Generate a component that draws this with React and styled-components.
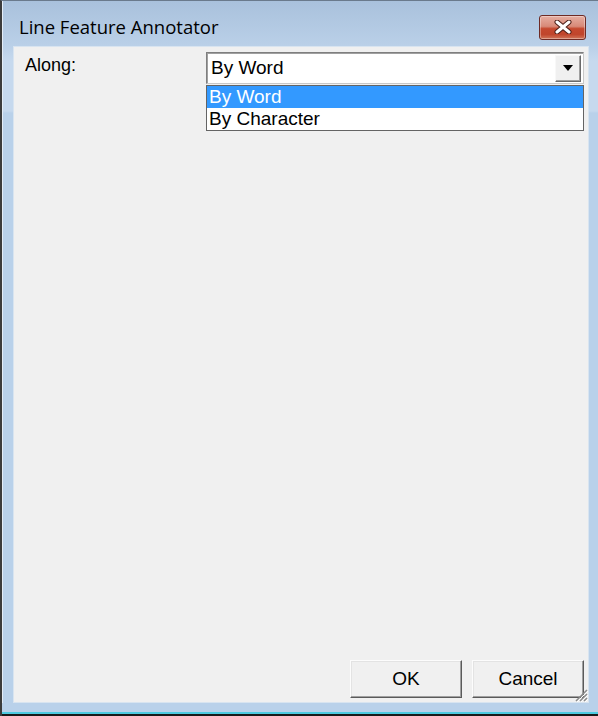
import React from 'react';
import styled, { createGlobalStyle } from 'styled-components';

const Global = createGlobalStyle`
  html, body { margin: 0; padding: 0; background: #1e1e1e; }
  body { font-family: "Liberation Sans", Arial, sans-serif; }
`;

const options = ['By Word', 'By Character'];

const App = () => (
  <>
    <Global />
    <Window>
      <TitleBar>
        <Title>Line Feature Annotator</Title>
        <CloseButton aria-label="Close">
          <svg width="22" height="14" viewBox="0 0 22 14">
            <path d="M5 2 L17 12 M17 2 L5 12" stroke="#4a1d16" strokeWidth="5" strokeLinecap="round" />
            <path d="M5 2 L17 12 M17 2 L5 12" stroke="#ffffff" strokeWidth="3" strokeLinecap="round" />
          </svg>
        </CloseButton>
      </TitleBar>
      <Client>
        <Row>
          <Label>Along:</Label>
          <ComboWrap>
            <Combo>
              <ComboText>By Word</ComboText>
              <DropButton>
                <svg width="10" height="6" viewBox="0 0 10 6">
                  <path d="M0 0 H10 L5 6 Z" fill="#000" />
                </svg>
              </DropButton>
            </Combo>
            <List>
              {options.map((o, i) => (
                <Option key={o} selected={i === 0}>{o}</Option>
              ))}
            </List>
          </ComboWrap>
        </Row>
        <Footer>
          <Button>OK</Button>
          <Button>Cancel</Button>
        </Footer>
        <Grip viewBox="0 0 16 16" width="16" height="16">
          <path d="M15 4 L4 15 M15 8 L8 15 M15 12 L12 15" stroke="#8a8a8a" strokeWidth="1.5" />
          <path d="M16 5 L5 16 M16 9 L9 16 M16 13 L13 16" stroke="#ffffff" strokeWidth="1" />
        </Grip>
      </Client>
      <BottomEdge />
    </Window>
  </>
);

const Window = styled.div`
  width: 598px;
  height: 716px;
  box-sizing: border-box;
  border-left: 2px solid #3c3c3c;
  border-top: 1px solid #6a7a8c;
  display: flex;
  flex-direction: column;
  background: linear-gradient(to bottom, #a9c1dc 0px, #bad0e8 45px, #c6d9ee 60px, #c6d9ee 110px, #b9d1ea 112px, #b9d1ea 100%);
  box-shadow: inset 1px 0 0 #e4edf7;
  overflow: hidden;
`;

const TitleBar = styled.div`
  height: 45px;
  display: flex;
  align-items: center;
  justify-content: space-between;
  padding: 0 12px 0 17px;
  flex-shrink: 0;
`;

const Title = styled.div`
  font-family: "Open Sans", "DejaVu Sans", sans-serif;
  font-size: 18.5px;
  color: #000;
  margin-top: 5px;
`;

const CloseButton = styled.div`
  width: 45px;
  height: 23px;
  margin-top: 7px;
  border: 1px solid #6e2b25;
  border-radius: 3px;
  display: flex;
  align-items: center;
  justify-content: center;
  background: linear-gradient(to bottom, #e6aea2 0%, #d88a78 45%, #c5492f 55%, #c0452c 80%, #d0765a 100%);
  box-shadow: inset 0 0 0 1px rgba(255, 255, 255, 0.35);
`;

const Client = styled.div`
  position: relative;
  flex: 1;
  margin: 0 9px 0 11px;
  background: #f0f0f0;
  border: 1px solid #d8e4f0;
  display: flex;
  flex-direction: column;
  justify-content: space-between;
`;

const Row = styled.div`
  display: flex;
  align-items: flex-start;
  padding: 5px 0 0 11px;
`;

const Label = styled.div`
  font-size: 18px;
  color: #000;
  width: 181px;
  padding-top: 3px;
`;

const ComboWrap = styled.div`
  display: flex;
  flex-direction: column;
  width: 378px;
`;

const Combo = styled.div`
  height: 32px;
  box-sizing: border-box;
  border: 1px solid #7f7f7f;
  border-right-color: #c8c8c8;
  border-bottom-color: #c8c8c8;
  box-shadow: inset 1px 1px 0 #a0a0a0;
  background: #fff;
  display: flex;
  align-items: center;
  justify-content: space-between;
  padding: 0 2px 0 4px;
`;

const ComboText = styled.div`
  font-size: 19px;
  color: #000;
`;

const DropButton = styled.div`
  width: 26px;
  height: 27px;
  box-sizing: border-box;
  background: #f0f0f0;
  border: 1px solid;
  border-color: #f8f8f8 #6a6a6a #6a6a6a #f8f8f8;
  box-shadow: inset -1px -1px 0 #a0a0a0;
  display: flex;
  align-items: center;
  justify-content: center;
`;

const List = styled.div`
  margin-top: 1px;
  border: 1px solid #646464;
  background: #fff;
  padding: 0;
`;

const Option = styled.div`
  height: 22px;
  line-height: 22px;
  font-size: 19px;
  padding-left: 2px;
  color: ${p => (p.selected ? '#fff' : '#000')};
  background: ${p => (p.selected ? '#3399ff' : '#fff')};
`;

const Footer = styled.div`
  display: flex;
  justify-content: flex-end;
  gap: 10px;
  padding: 0 4px 4px 0;
`;

const Button = styled.div`
  width: 112px;
  height: 38px;
  box-sizing: border-box;
  border: 1px solid;
  border-color: #fcfcfc #5a5a5a #5a5a5a #fcfcfc;
  box-shadow: inset -1px -1px 0 #a0a0a0, inset 1px 1px 0 #e3e3e3;
  background: #f0f0f0;
  display: flex;
  align-items: center;
  justify-content: center;
  font-size: 19px;
  color: #000;
`;

const Grip = styled.svg`
  position: absolute;
  right: 0;
  bottom: 0;
`;

const BottomEdge = styled.div`
  height: 13px;
  flex-shrink: 0;
  background: linear-gradient(to bottom, #b9d1ea 0px, #b9d1ea 9px, #4ccae0 9px, #4ccae0 11px, #1a1a1a 11px);
`;

export default App;
